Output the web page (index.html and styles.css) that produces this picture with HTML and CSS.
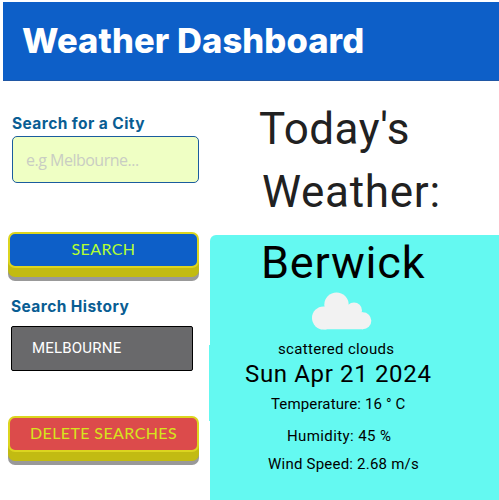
FILE: index.html
```html
<!DOCTYPE html>
<html lang="en">
<head>
<meta charset="utf-8">
<title>Weather Dashboard</title>
<link rel="stylesheet" href="styles.css">
</head>
<body>
<header class="banner"><h1>Weather Dashboard</h1></header>
<div class="layout">
  <aside class="sidebar">
    <label class="heading city-label" for="city"><span>Search for a City</span></label>
    <input class="city-input" id="city" type="text" placeholder="e.g Melbourne...">
    <button class="btn btn-search"><span>SEARCH</span></button>
    <h2 class="heading history-label"><span>Search History</span></h2>
    <div class="history-item"><span>MELBOURNE</span></div>
    <button class="btn btn-delete"><span>DELETE SEARCHES</span></button>
  </aside>
  <main class="today">
    <h2 class="today-title"><span class="line-one">Today's</span><span class="line-two">Weather:</span></h2>
    <section class="card">
      <div class="city"><span>Berwick</span></div>
      <svg class="cloud" viewBox="0 0 60 38" width="60" height="38" fill="#f2f2f2">
        <circle cx="11.5" cy="26" r="11.5"/>
        <circle cx="24.5" cy="12.7" r="12.2"/>
        <circle cx="42" cy="18.5" r="8"/>
        <circle cx="50.8" cy="28.8" r="8.5"/>
        <path d="M11.5 15H42V20.500H51V37.300H11.500Z"/>
      </svg>
      <div class="description"><span>scattered clouds</span></div>
      <div class="date"><span>Sun Apr 21 2024</span></div>
      <div class="reading temperature"><span>Temperature: 16 ° C</span></div>
      <div class="reading humidity"><span>Humidity: 45 %</span></div>
      <div class="reading wind"><span>Wind Speed: 2.68 m/s</span></div>
    </section>
  </main>
</div>
</body>
</html>
```
FILE: styles.css
```css
* { box-sizing: border-box; }
body {
  margin: 0;
  height: 500px;
  overflow: hidden;
  background: #fff;
  font-family: Roboto, sans-serif;
  display: flow-root;
}
h1, h2 { margin: 0; }
.banner {
  margin: 2px 0 0 3px;
  height: 79px;
  padding: 0 0 1px 19px;
  display: flex;
  align-items: center;
  background: #0d5fc8;
  border-bottom: 1px solid #2057a4;
  color: #fff;
}
.banner h1 { font: 800 34.500px Inter, sans-serif; letter-spacing: .1px; white-space: nowrap; }
.layout { display: flex; height: 419px; }
.sidebar {
  width: 210px;
  flex: none;
  padding: 33px 11px 0 8px;
  display: flex;
  flex-direction: column;
}
.heading { font: 700 15.500px/20px Inter, sans-serif; letter-spacing: .42px; color: #095d93; white-space: nowrap; }
.city-label { margin-left: 4px; }
.city-input {
  width: 187px;
  height: 47px;
  margin: 2px 0 0 4px;
  padding: 0 13px;
  border: 1px solid #1a5c9e;
  border-radius: 5px;
  background: #efffc4;
  font: 16px "Open Sans", sans-serif;
  letter-spacing: -.5px;
}
.city-input::placeholder { color: #c9cdc3; opacity: 1; }
.btn {
  width: 191px;
  height: 36px;
  padding: 0;
  flex: none;
  border: 2px solid #dcd51f;
  border-radius: 7px;
  box-shadow: 0 9px 0 #c2bb12, 0 13px 0 #999;
  font: 16px/32px Lato, sans-serif;
  letter-spacing: .4px;
  white-space: nowrap;
}
.btn span { display: block; padding-bottom: 2px; line-height: 30px; }
.btn-search { margin-top: 49px; background: #0d5fc8; color: #b4ff32; }
.btn-delete { margin-top: 45px; background: #dc4b4b; color: #d6e51c; }
.history-label { margin: 29px 0 0 3px; }
.history-item {
  width: 182px;
  height: 45px;
  margin: 9px 0 0 3px;
  padding-left: 20px;
  border: 1px solid #000;
  border-radius: 2px;
  background: #69696b;
  color: #fff;
  font-size: 15px;
  line-height: 43px;
  letter-spacing: .2px;
}
.today { flex: 1; min-width: 0; }
.today-title { height: 154px; padding-top: 17px; font-size: 44px; line-height: 63px; font-weight: 400; color: #212121; }
.today-title span { display: block; white-space: nowrap; }
.line-one { margin-left: 49px; letter-spacing: .5px; }
.line-two { margin-left: 52px; letter-spacing: .7px; }
.card {
  position: relative;
  height: 265px;
  border-top-left-radius: 6px;
  background: #64f9f1;
  color: #000;
  white-space: nowrap;
}
.card::before { content: ""; position: absolute; left: -1px; top: 110px; width: 1px; height: 76px; background: #64f9f1; }
.city { padding-left: 51px; font-size: 45px; line-height: 56px; letter-spacing: .8px; }
.cloud { display: block; margin: 1px 0 0 102px; }
.description { margin: 9px 0 0 68px; font-size: 15px; line-height: 20px; letter-spacing: .33px; }
.date { margin: 1px 0 0 35px; font-size: 24px; line-height: 28px; letter-spacing: .65px; }
.reading { font-size: 15px; line-height: 20px; }
.temperature { margin: 6px 0 0 61px; letter-spacing: .14px; }
.humidity { margin: 12px 0 0 77px; letter-spacing: .4px; }
.wind { margin: 8px 0 0 58px; letter-spacing: .22px; }
```
